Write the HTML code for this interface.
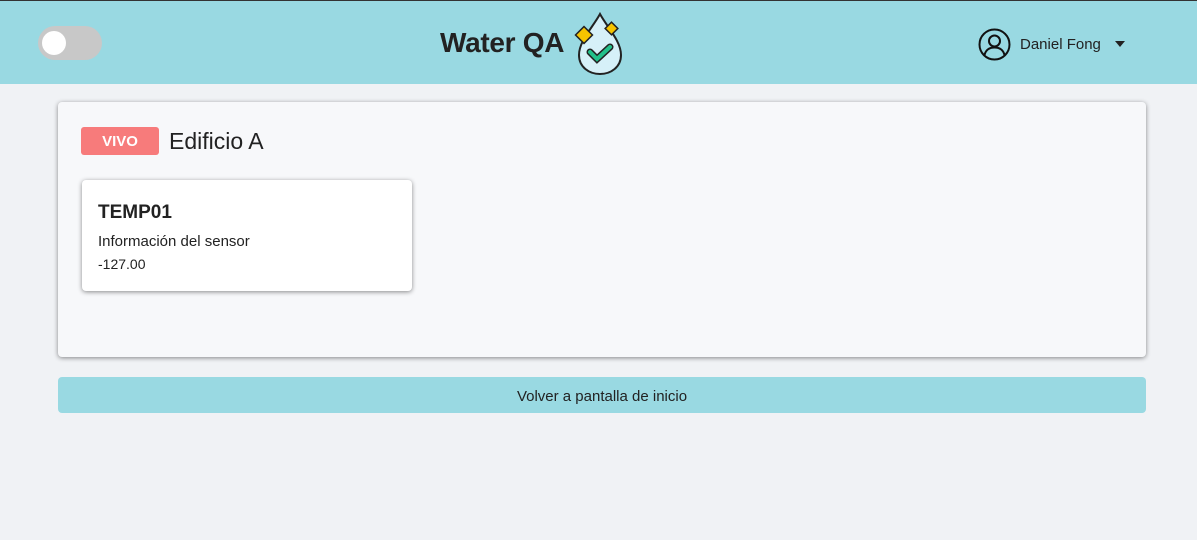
<!DOCTYPE html>
<html><head><style>
body{margin:0;width:1197px;height:540px;background:#f0f2f5;font-family:"Liberation Sans",sans-serif;position:relative;overflow:hidden}
.hdr{position:absolute;left:0;top:0;width:1197px;height:84px;background:#99d9e2;border-top:1px solid #333;box-sizing:border-box}
.tog{position:absolute;left:38px;top:25px;width:64px;height:34px;border-radius:17px;background:#c8c8c8}
.tog i{position:absolute;left:4px;top:5px;width:24px;height:24px;border-radius:50%;background:#fff}
.title{position:absolute;left:440px;top:26px;font-size:28px;font-weight:bold;color:#222;letter-spacing:-0.3px}
.user{position:absolute;left:1020px;top:35px;font-size:15px;color:#222}
.card{position:absolute;left:58px;top:102px;width:1088px;height:255px;background:#f7f8fa;border-radius:4px;box-shadow:0 1px 5px rgba(0,0,0,.45)}
.vivo{position:absolute;left:23px;top:25px;width:78px;height:28px;background:#f77b7b;border-radius:3px;color:#fff;font-weight:bold;font-size:15px;text-align:center;line-height:30px}
.ed{position:absolute;left:111px;top:26px;font-size:23px;color:#222}
.sc{position:absolute;left:24px;top:78px;width:330px;height:111px;background:#fff;border-radius:4px;box-shadow:0 1px 5px rgba(0,0,0,.45)}
.btn{position:absolute;left:58px;top:377px;width:1088px;height:36px;background:#99d9e2;border-radius:4px;text-align:center;line-height:40px;font-size:15px;color:#222}
</style></head><body>
<div class="hdr">
<div class="tog"><i></i></div>
<div class="title">Water QA</div>
<svg style="position:absolute;left:573px;top:10px" width="52" height="66" viewBox="0 0 52 66">
<path d="M27 3 C20 16 6 30 6 44 C6 56 16 63 27 63 C38 63 48 56 48 44 C48 30 34 16 27 3Z" fill="#d6f0f8" stroke="#222" stroke-width="2"/>
<path d="M17 41 l7 7 l13 -12" fill="none" stroke="#222" stroke-width="7" stroke-linecap="round"/>
<path d="M17 41 l7 7 l13 -12" fill="none" stroke="#22c08a" stroke-width="4" stroke-linecap="round"/>
<rect x="5" y="18" width="12" height="12" transform="rotate(45 11 24)" fill="#f5c400" stroke="#222" stroke-width="1.5"/>
<rect x="34" y="13" width="9" height="9" transform="rotate(45 38.5 17.5)" fill="#f5c400" stroke="#222" stroke-width="1.5"/>
</svg>
<svg style="position:absolute;left:978px;top:27px" width="33" height="33" viewBox="0 0 33 33"><circle cx="16.5" cy="16.5" r="15" fill="none" stroke="#111" stroke-width="2"/><circle cx="16.5" cy="13" r="5.5" fill="none" stroke="#111" stroke-width="2"/><path d="M6.5 27 C8 21 12 19.5 16.5 19.5 C21 19.5 25 21 26.5 27" fill="none" stroke="#111" stroke-width="2"/></svg>
<div class="user">Daniel Fong</div>
<svg style="position:absolute;left:1115px;top:40px" width="10" height="6"><path d="M0 0 H10 L5 6Z" fill="#222"/></svg>
</div>
<div class="card">
<div class="vivo">VIVO</div>
<div class="ed">Edificio A</div>
<div class="sc">
<div style="position:absolute;left:16px;top:22px;font-size:19px;font-weight:bold;color:#222">TEMP01</div>
<div style="position:absolute;left:16px;top:53px;font-size:15px;color:#222">Información del sensor</div>
<div style="position:absolute;left:16px;top:76px;font-size:14px;color:#222">-127.00</div>
</div>
</div>
<div class="btn">Volver a pantalla de inicio</div>
</body></html>
